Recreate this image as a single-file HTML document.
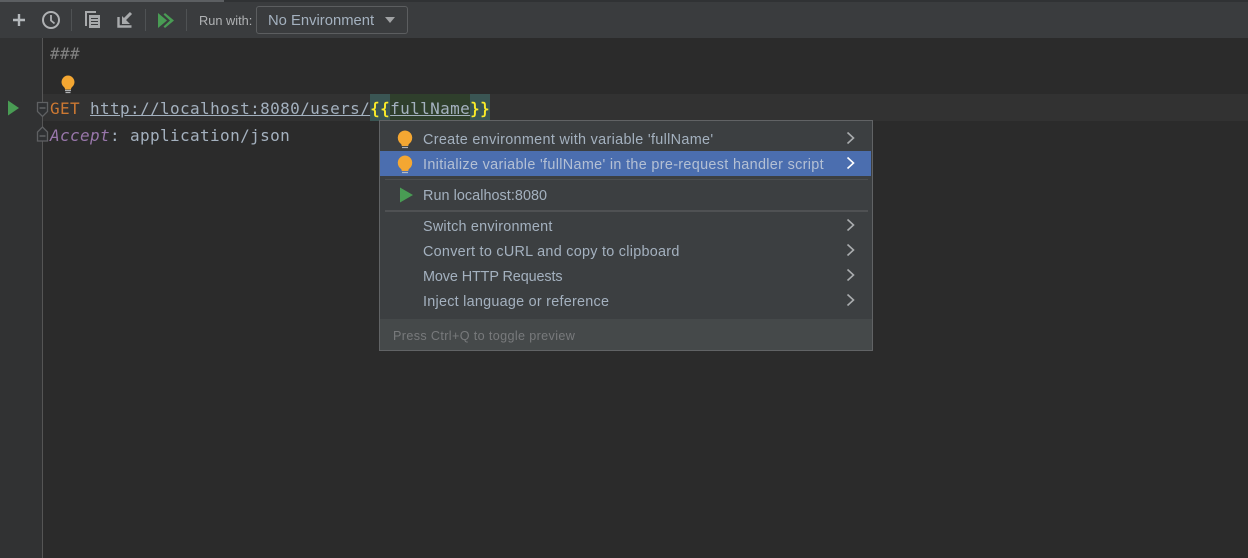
<!DOCTYPE html>
<html><head><meta charset="utf-8">
<style>
html,body{margin:0;padding:0;background:#2b2b2b}
#r{position:relative;width:1248px;height:558px;overflow:hidden;background:#2b2b2b}
#r div,#r span.a,#r svg{position:absolute}
.m{font:16px/20px "DejaVu Sans Mono","Liberation Mono",monospace;white-space:pre;letter-spacing:.37px;color:#a4b1bf}
.t{font:14.4px/20px "Liberation Sans",sans-serif;color:#a4b1bf;white-space:pre;left:423px}
</style></head><body>
<div id="r">
<div style="left:0;top:0;width:1248px;height:38px;background:#3a3c3e"></div>
<div style="left:0;top:0;width:1248px;height:2px;background:#303234"></div>
<div style="left:0;top:0;width:224px;height:2px;background:#5c5f62"></div>
<svg style="left:0;top:0" width="420" height="38">
<path d="M19 14v12M13 20h12" stroke="#b4b8bb" stroke-width="2.4" fill="none"/>
<circle cx="51" cy="20" r="8" stroke="#afb1b3" stroke-width="2" fill="none"/>
<path d="M51 15v5.500l3.500 3" stroke="#afb1b3" stroke-width="1.800" fill="none"/>
<path d="M71.500 9v22M145.500 9v22M186.500 9v22" stroke="#4f5254" stroke-width="1"/>
<path d="M87 25h-1V12h9v1" stroke="#a8aaac" stroke-width="2" fill="none"/>
<path d="M89 15h11v13H89z" fill="#a8aaac"/>
<path d="M91 18.500h7M91 21.500h7M91 24.500h7" stroke="#3a3c3e" stroke-width="1"/>
<path d="M118.500 17v9.500h13" stroke="#a8aaac" stroke-width="2.400" fill="none"/>
<path d="M131 13l-7 7" stroke="#a8aaac" stroke-width="3" fill="none"/>
<path d="M122 16v8h8z" fill="#a8aaac"/>
<path d="M158 13l9 7.500-9 7.500z" fill="#499c54"/>
<path d="M165 13l9 7.500-9 7.500-1.500-1.500 6.500-6-6.500-6z" fill="#499c54"/>
</svg>
<div style="left:199px;top:11px;font:12.800px/20px 'Liberation Sans',sans-serif;color:#b0b2b4;white-space:pre">Run with:</div>
<div style="left:256px;top:6px;width:150px;height:26px;border:1px solid #5c5e60;border-radius:3px;background:#3a3c3e"></div>
<div style="left:268px;top:11px;font:14.800px/20px 'Liberation Sans',sans-serif;color:#a4b1bf;white-space:pre">No Environment</div>
<svg style="left:384px;top:16px" width="13" height="8"><path d="M1 1h10L6 7z" fill="#a0a2a4"/></svg>

<div style="left:0;top:38px;width:43px;height:520px;background:#313233"></div>
<div style="left:42px;top:38px;width:1px;height:520px;background:#555"></div>
<div style="left:43px;top:94px;width:1205px;height:27px;background:#323232"></div>

<div class="m" style="left:50px;top:44px;color:#808080">###</div>
<svg style="left:58px;top:74px" width="20" height="22">
<path d="M10 1.500a6.500 6.500 0 0 1 4 11.600c-.7.600-1 1.200-1 2.400H7c0-1.200-.3-1.800-1-2.400A6.500 6.500 0 0 1 10 1.500z" fill="#f4a732"/>
<path d="M7 16.500h6M7.500 18.500h5" stroke="#afb1b3" stroke-width="1.200"/></svg>
<svg style="left:0;top:90px" width="60" height="60">
<path d="M8 10.500l11 7.500-11 7.500z" fill="#499c54"/>
<path d="M37.500 12.500h10v9l-5 5-5-5zM42.500 37l5 5v9h-10v-9z" stroke="#5f6163" stroke-width="1.300" fill="#2f3133"/>
<path d="M39.500 18h6M39.500 46h6" stroke="#6a6c6e" stroke-width="1.300"/>
</svg>

<div style="left:370px;top:94px;width:20px;height:27px;background:#3a5553"></div>
<div style="left:390px;top:94px;width:80px;height:27px;background:#2f3f2c"></div>
<div style="left:470px;top:94px;width:20px;height:27px;background:#3a5553"></div>
<div class="m" style="left:50px;top:99px"><span style="color:#cc7832">GET</span> <span style="text-decoration:underline">http://localhost:8080/users/</span><span style="color:#ffef28;-webkit-text-stroke:.4px #ffef28">{{</span><span style="text-decoration:underline">fullName</span><span style="color:#ffef28;-webkit-text-stroke:.4px #ffef28">}}</span></div>
<div class="m" style="left:50px;top:126px"><span style="color:#9876aa;font-style:italic">Accept</span>: application/json</div>

<div style="left:379px;top:120px;width:492px;height:229px;border:1px solid #616365;background:#3c3f41"></div>
<div style="left:380px;top:151px;width:491px;height:25px;background:#4b6eaf"></div>
<div style="left:385px;top:179px;width:483px;height:1px;background:#4c4e50"></div>
<div style="left:385px;top:210px;width:483px;height:2px;background:#4f5153"></div>
<div style="left:380px;top:319px;width:492px;height:31px;background:#45494a"></div>

<svg style="left:380px;top:120px" width="492" height="100">
<path d="M25 10.500a7.300 7.300 0 0 1 4.500 13c-.8.700-1.200 1.300-1.200 2.500h-6.600c0-1.200-.4-1.800-1.200-2.500a7.300 7.300 0 0 1 4.500-13z" fill="#f4a732"/><path d="M22 27.500h6" stroke="#afb1b3" stroke-width="1.200"/>
<path d="M25 35.500a7.300 7.300 0 0 1 4.500 13c-.8.700-1.200 1.300-1.200 2.500h-6.600c0-1.200-.4-1.800-1.200-2.500a7.300 7.300 0 0 1 4.500-13z" fill="#f4a732"/><path d="M22 52.500h6" stroke="#b8bcc4" stroke-width="1.200"/>
<path d="M20 67.500l13 7.500-13 7.500z" fill="#499c54"/>
</svg>
<svg style="left:846px;top:130px" width="14" height="185" fill="none" stroke="#a9acae" stroke-width="1.600">
<path d="M1.500 2.500l6 5.500-6 5.500"/>
<path d="M1.500 27.500l6 5.500-6 5.500" stroke="#fff"/>
<path d="M1.500 89.500l6 5.500-6 5.500M1.500 114.500l6 5.500-6 5.500M1.500 139.500l6 5.500-6 5.500M1.500 164.500l6 5.500-6 5.500"/>
</svg>
<div class="t" style="top:130px;letter-spacing:.32px">Create environment with variable 'fullName'</div>
<div class="t" style="top:155px;color:#b4c0d4;letter-spacing:.33px">Initialize variable 'fullName' in the pre-request handler script</div>
<div class="t" style="top:186px;letter-spacing:.05px">Run localhost:8080</div>
<div class="t" style="top:217px;letter-spacing:.22px">Switch environment</div>
<div class="t" style="top:242px;letter-spacing:.27px">Convert to cURL and copy to clipboard</div>
<div class="t" style="top:267px;letter-spacing:-.1px">Move HTTP Requests</div>
<div class="t" style="top:292px;letter-spacing:.25px">Inject language or reference</div>
<div style="left:393px;top:326px;font:12.600px/20px 'Liberation Sans',sans-serif;color:#787a7c;white-space:pre;letter-spacing:.37px">Press Ctrl+Q to toggle preview</div>
</div>
</body></html>
